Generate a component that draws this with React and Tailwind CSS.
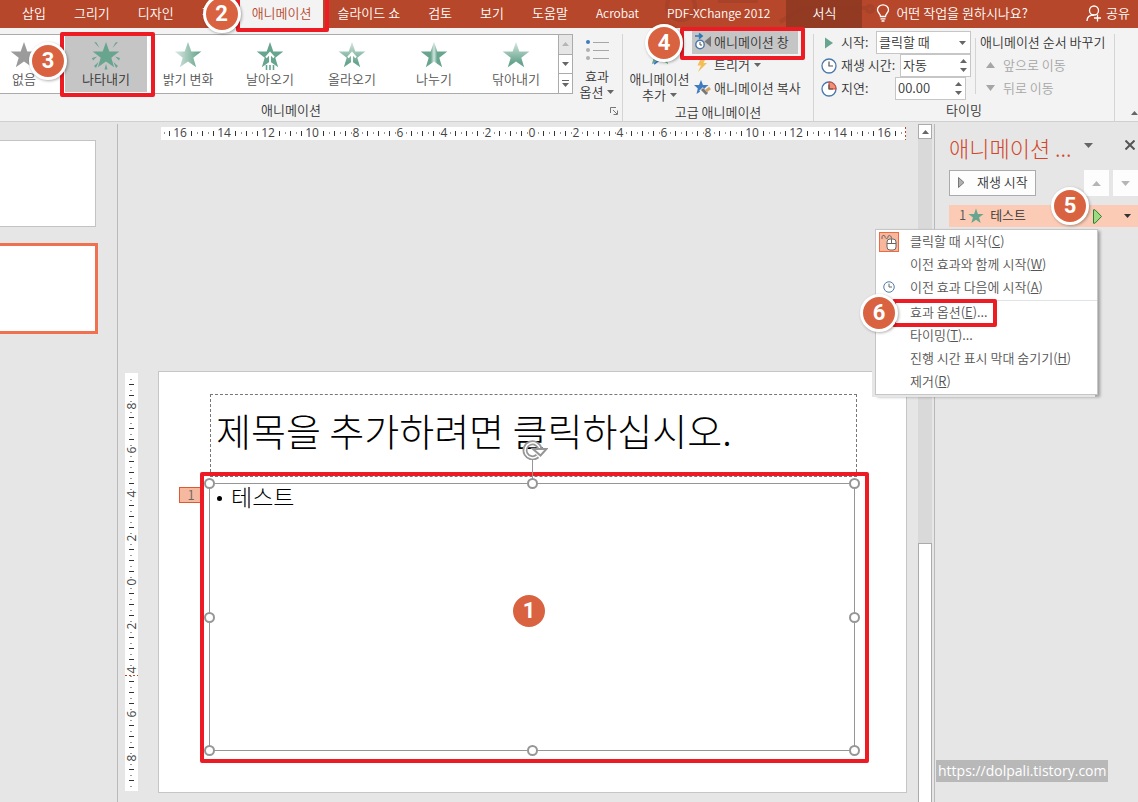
const STAR = 'M14 1 L17.3 10.4 L27.3 10.6 L19.3 16.7 L22.2 26.3 L14 20.6 L5.8 26.3 L8.7 16.7 L0.7 10.6 L10.7 10.4 Z';

const tabs = ['삽입', '그리기', '디자인', '전환', '애니메이션', '슬라이드 쇼', '검토', '보기', '도움말'];
const addInTabs = ['Acrobat', 'PDF-XChange 2012'];

const effects = [
  { id: 'none', label: '없음' },
  { id: 'appear', label: '나타내기' },
  { id: 'fade', label: '밝기 변화' },
  { id: 'fly', label: '날아오기' },
  { id: 'float', label: '올라오기' },
  { id: 'split', label: '나누기' },
  { id: 'wipe', label: '닦아내기' },
];

const Badge = ({ n, className = '' }) => (
  <span
    className={`absolute z-20 flex size-[38px] items-center justify-center rounded-full border-[3px] border-white bg-[#d96341] font-['Roboto',sans-serif] text-[22px] font-bold leading-none text-white shadow-[1px_1px_3px_#00000055] ${className}`}
  >
    {n}
  </span>
);

const Frame = ({ className = '' }) => (
  <span className={`pointer-events-none absolute z-10 rounded-[2px] border-4 border-[#ed1c24] ${className}`}></span>
);

const Caret = ({ up, className = 'text-[#666]' }) => (
  <svg width="7" height="4" viewBox="0 0 7 4" className={`shrink-0 ${className}`} fill="currentColor">
    <path d={up ? 'M0 4 L3.5 0 L7 4 Z' : 'M0 0 L3.5 4 L7 0 Z'} />
  </svg>
);

const ClockIcon = ({ size = 16, red }) => (
  <svg width={size} height={size} viewBox="0 0 16 16" fill="none">
    <circle cx="8" cy="8" r="7" fill="#fff" stroke="#4a78ab" strokeWidth="1.3" />
    {red && <path d="M8 8 V1 A7 7 0 0 1 15 8 Z" fill="#f0907a" stroke="#d9472b" />}
    <path d="M8 3.5 V8 H12" stroke="#555" strokeWidth="1.2" />
  </svg>
);

const EffectIcon = ({ id }) => {
  const fill = { none: '#9b9b9b', fade: 'url(#fade)', float: 'url(#wipe)', split: 'url(#split)', wipe: 'url(#wipe)' }[id] || '#68a58f';
  return (
    <svg width="28" height="29" viewBox="0 0 28 29" fill="none">
      <defs>
        <linearGradient id="fade">
          <stop offset="0" stopColor="#dcebe5" />
          <stop offset="1" stopColor="#5fa088" />
        </linearGradient>
        <linearGradient id="wipe" x1="0" y1="0" x2="0" y2="1">
          <stop offset="0" stopColor="#d3e6df" />
          <stop offset="0.8" stopColor="#68a58f" />
        </linearGradient>
        <linearGradient id="split">
          <stop offset="0.38" stopColor="#68a58f" />
          <stop offset="0.5" stopColor="#d3e6df" />
          <stop offset="0.62" stopColor="#68a58f" />
        </linearGradient>
      </defs>
      <path d={STAR} fill={fill} />
      {id === 'appear' && (
        <path
          d="M2 1 L4.5 1.5 L7.5 7 Z M26 1 L23.5 1.5 L20.5 7 Z M0 17 L5 15.5 L1 19.5 Z M28 17 L23 15.5 L27 19.5 Z M6.5 21 L2 25 L4 27 Z M21.5 21 L26 25 L24 27 Z M14 23 L12.5 28.5 H15.5 Z"
          fill="#68a58f"
        />
      )}
      {(id === 'fly' || id === 'float') && <path d="M14 23 V12 M10 16.5 L14 12 L18 16.5" stroke="#fff" strokeWidth="2" />}
      {id === 'fly' && <path d="M10.5 24 V29 M14 24 V29 M17.5 24 V29" stroke="#68a58f" strokeWidth="1.6" />}
    </svg>
  );
};

const GroupLabel = ({ children, className = '' }) => (
  <div className={`mt-auto mb-0.5 text-center leading-[18px] ${className}`}>{children}</div>
);

const Header = () => (
  <header className="relative flex h-7 shrink-0 items-stretch bg-[#b7472a] pl-2 text-white">
    <svg className="absolute left-[640px] top-0" width="250" height="28" fill="none" stroke="#a84228" strokeWidth="4">
      <circle cx="41" cy="6" r="14" />
      <path d="M78 1 H118 M140 22 L162 8 H226" />
      <circle cx="230" cy="9" r="3" />
    </svg>
    {tabs.map((tab) =>
      tab === '애니메이션' ? (
        <button key={tab} className="relative whitespace-nowrap bg-[#f3f3f3] px-3 pb-0.5 text-[#b7472a]">
          {tab}
          <Frame className="-left-1 -right-1.5 -bottom-1 -top-2" />
          <Badge n={2} className="-left-[37px] -top-[5px]" />
        </button>
      ) : (
        <button key={tab} className="relative whitespace-nowrap px-[14px] pb-0.5">{tab}</button>
      )
    )}
    {addInTabs.map((tab) => (
      <button key={tab} className="relative whitespace-nowrap px-[14px] pb-0.5 text-xs">{tab}</button>
    ))}
    <button className="relative ml-0.5 bg-[#8f3922]/90 px-[26px] pb-0.5">서식</button>
    <button className="relative ml-3.5 flex items-center gap-1.5 whitespace-nowrap pb-0.5">
      <svg width="14" height="18" viewBox="0 0 14 18" fill="none" stroke="currentColor" strokeWidth="1.3">
        <path d="M4.5 12.5 C4.5 9.5 1.5 9 1.5 5.8 A5.5 5 0 0 1 12.5 5.8 C12.5 9 9.5 9.5 9.5 12.5 Z M4.5 14.8 H9.5 M5.5 17 H8.5" />
      </svg>
      어떤 작업을 원하시나요?
    </button>
    <button className="relative ml-auto mr-2 flex items-center gap-1 pb-0.5">
      <svg width="16" height="17" viewBox="0 0 16 17" fill="none" stroke="currentColor" strokeWidth="1.3">
        <circle cx="8" cy="5.5" r="4.5" />
        <path d="M1 16 C1 12 4 10 8 10 M11.5 9.5 V16.5 M8 13 H15" />
      </svg>
      공유
    </button>
  </header>
);

const AnimationGroup = () => (
  <section className="flex w-[623px] shrink-0 flex-col border-r border-[#d4d4d4]">
    <div className="flex">
      <div className="flex h-[60px] w-[558px] border-y border-[#ababab] bg-white">
        <div className="-ml-[17px] flex py-px">
          {effects.map((effect) => (
            <button
              key={effect.id}
              className={`relative flex w-[82px] flex-col items-center pt-[5px] leading-[18px] ${effect.id === 'appear' ? 'bg-[#c5c5c5] text-[#333]' : 'text-[#555]'}`}
            >
              <EffectIcon id={effect.id} />
              {effect.label}
              {effect.id === 'appear' && (
                <>
                  <Frame className="-bottom-[5px] -left-[5px] -right-2 -top-1" />
                  <Badge n={3} className="-left-9 top-1.5" />
                </>
              )}
            </button>
          ))}
        </div>
      </div>
      <div className="flex h-[60px] w-[15px] flex-col divide-y divide-[#ababab] border border-[#ababab] bg-white">
        <button aria-label="위로" className="flex flex-1 items-center justify-center bg-[#e6e6e6]"><Caret up className="text-[#b5b5b5]" /></button>
        <button aria-label="아래로" className="flex flex-1 items-center justify-center"><Caret /></button>
        <button aria-label="자세히" className="flex flex-1 flex-col items-center justify-center gap-0.5">
          <span className="h-px w-[7px] bg-[#666]"></span>
          <Caret />
        </button>
      </div>
      <button className="flex w-12 flex-col items-center pt-[5px] leading-4">
        <svg width="23" height="22" viewBox="0 0 23 22" stroke="#a6a6a6" className="mb-[7px]">
          <path d="M7 3.5 H23 M7 11.5 H23 M7 19.5 H23" />
          <circle cx="2" cy="3" r="2" fill="#3f7bbf" stroke="none" />
          <circle cx="2" cy="11" r="2" fill="#b0b0b0" stroke="none" />
          <circle cx="2" cy="19" r="2" fill="#b0b0b0" stroke="none" />
        </svg>
        효과
        <span className="flex items-center gap-1">옵션 <Caret /></span>
      </button>
    </div>
    <div className="mt-auto flex items-center">
      <GroupLabel className="ml-10 flex-1">애니메이션</GroupLabel>
      <button aria-label="추가 효과 옵션 표시" className="ml-[68px] mr-1">
        <svg width="8" height="8" viewBox="0 0 8 8" fill="none" stroke="#777">
          <path d="M0.5 6 V0.5 H6 M3 3 L7 7 M7.5 3.5 V7.5 H3.5" />
        </svg>
      </button>
    </div>
  </section>
);

const AdvancedGroup = () => (
  <section className="flex w-[191px] shrink-0 flex-col border-r border-[#d4d4d4]">
    <div className="-mt-[3px] flex">
      <button className="relative flex w-[69px] flex-col items-center pl-1 pt-[7px] leading-4">
        <svg width="28" height="29" viewBox="0 0 28 29" className="mb-1">
          <path d={STAR} fill="#68a58f" />
          <path d="M8 26 L13 22" fill="none" stroke="#3f7bbf" strokeWidth="2" />
        </svg>
        <span className="whitespace-nowrap">애니메이션</span>
        <span className="flex items-center gap-1">추가 <Caret /></span>
      </button>
      <div className="flex flex-col">
        <button className="relative flex h-[23px] w-[106px] items-center gap-0.5 bg-[#c5c5c5] pb-0.5 pl-0.5 text-[#333]">
          <svg width="18" height="17" viewBox="0 0 18 17" fill="none">
            <path d="M1 3 H7 M5 0.5 L8 3 L5 5.5" stroke="#2e75b6" strokeWidth="1.7" />
            <circle cx="6" cy="11.5" r="4.2" fill="#fff" stroke="#4a78ab" strokeWidth="1.4" />
            <path d="M6 9 V12 H8" stroke="#555" />
            <path d="M17 3 V14 L10.5 8.5 Z" fill="#777" />
          </svg>
          애니메이션 창
          <Frame className="-left-3 -right-[7px] -top-1 -bottom-[6px]" />
          <Badge n={4} className="-left-[47px] -top-[7px]" />
        </button>
        <button className="flex h-[23px] items-center gap-0.5 pb-0.5 pl-0.5">
          <svg width="18" height="16" viewBox="0 0 18 16">
            <path d="M7 1 H12 L9.5 6 H13 L4 15 L7 8.5 H3.5 Z" fill="#f3bd58" />
          </svg>
          트리거 <Caret className="ml-0.5 text-[#666]" />
        </button>
        <button className="flex h-[23px] items-center gap-0.5 whitespace-nowrap pb-0.5 pl-0.5">
          <svg width="18" height="16" viewBox="0 0 18 16">
            <path d="M7 0 L9 5 H14.5 L10.5 8.5 L11.5 14 L7 11 L2.5 14 L3.8 8.5 L0 5 H5 Z" fill="#3f7bbf" />
            <path d="M7 9 L12 14 M9 15 L15 8" stroke="#f3f3f3" strokeWidth="5" />
            <path d="M8 9 L13 14" stroke="#777" strokeWidth="3" />
            <path d="M12 11 L16 8" stroke="#d5a36a" strokeWidth="3" />
          </svg>
          애니메이션 복사
        </button>
      </div>
    </div>
    <GroupLabel>고급 애니메이션</GroupLabel>
  </section>
);

const Spinner = ({ id, value, className = '' }) => (
  <span className={`flex h-[23px] items-center border border-[#c6c6c6] bg-white pr-[3px] ${className}`}>
    <input id={id} defaultValue={value} className="w-0 min-w-0 flex-1 pb-0.5 pl-0.5 outline-none" />
    <span className="flex flex-col gap-[5px]">
      <Caret up />
      <Caret />
    </span>
  </span>
);

const TimingGroup = () => (
  <section className="flex w-[301px] shrink-0 flex-col border-r border-[#d4d4d4]">
    <div className="-mt-[3px] flex pl-[7px]">
      <div className="flex w-[150px] flex-col">
        <div className="flex h-[23px] items-center">
          <svg width="20" height="12" viewBox="0 0 20 12"><path d="M4 0.5 L12 6 L4 11.5 Z" fill="#68a58f" /></svg>
          <label htmlFor="start" className="pb-0.5">시작:</label>
          <span className="relative ml-auto flex h-[23px] w-[95px] items-center border border-[#c6c6c6] bg-white">
            <select id="start" className="w-full appearance-none pb-0.5 pl-0.5 outline-none">
              <option>클릭할 때</option>
            </select>
            <Caret className="absolute right-1 text-[#666]" />
          </span>
        </div>
        <div className="flex h-[23px] items-center">
          <span className="w-5"><ClockIcon /></span>
          <label htmlFor="duration" className="whitespace-nowrap pb-0.5">재생 시간:</label>
          <Spinner id="duration" value="자동" className="ml-auto w-[71px]" />
        </div>
        <div className="flex h-[23px] items-center">
          <span className="w-5"><ClockIcon red /></span>
          <label htmlFor="delay" className="pb-0.5">지연:</label>
          <Spinner id="delay" value="00.00" className="ml-auto mr-[5px] w-[71px]" />
        </div>
      </div>
      <div className="ml-1 mt-[7px] h-14 w-px bg-[#d4d4d4]"></div>
      <div className="ml-1 flex flex-col">
        <span className="h-[23px] whitespace-nowrap leading-[21px]">애니메이션 순서 바꾸기</span>
        <button disabled className="flex h-[23px] items-center gap-2 pb-0.5 pl-1.5 text-[#a6a6a6]">
          <svg width="9" height="6" viewBox="0 0 9 6" fill="currentColor"><path d="M0 6 L4.5 0 L9 6 Z" /></svg>
          앞으로 이동
        </button>
        <button disabled className="flex h-[23px] items-center gap-2 pb-0.5 pl-1.5 text-[#a6a6a6]">
          <svg width="9" height="6" viewBox="0 0 9 6" fill="currentColor"><path d="M0 0 L4.5 6 L9 0 Z" /></svg>
          뒤로 이동
        </button>
      </div>
    </div>
    <GroupLabel>타이밍</GroupLabel>
  </section>
);

const Ruler = ({ length, zero, vertical, cursor }) => {
  const marks = [];
  for (let i = -67; i <= 67; i++) {
    const at = Math.round(zero + i * 5.5);
    if (at > 2 && at < length - 2) marks.push({ i, at });
  }
  return (
    <svg width={vertical ? 13 : length} height={vertical ? length : 13} className="shrink-0 overflow-visible bg-white">
      {marks.map(({ i, at }) => {
        if (i % 8 === 0) {
          return (
            <text
              key={i}
              x={vertical ? 7 : at}
              y={vertical ? at : 10}
              transform={vertical ? `rotate(-90 7 ${at})` : undefined}
              dy={vertical ? 4 : 0}
              textAnchor="middle"
              fill="#444"
              className="font-['Open_Sans',sans-serif] text-[12px] font-normal"
            >
              {Math.abs(i / 4)}
            </text>
          );
        }
        // whole and half units get the long dark tick
        const long = i % 2 === 0;
        const besideLabel = Math.abs(i % 8) === 1 || Math.abs(i % 8) === 7;
        if (besideLabel && Math.abs(i) > 38 && !vertical) return null;
        const size = long ? 5 : 2;
        const from = long ? 4 : 5;
        return (
          <rect
            key={i}
            x={vertical ? from : at}
            y={vertical ? at : from}
            width={vertical ? size : 1}
            height={vertical ? 1 : size}
            fill={long ? '#333' : '#999'}
          />
        );
      })}
      <path d={vertical ? `M0 ${cursor}.5 H13` : `M${cursor}.5 0 V13`} stroke="#c8401f" strokeDasharray="2 2" />
    </svg>
  );
};

const Handle = ({ className }) => (
  <span className={`absolute size-[11px] rounded-full border-2 border-[#969696] bg-white ${className}`}></span>
);

const Slide = () => (
  <div className="ml-5 flex flex-1 flex-col border border-[#c6c6c6] bg-white pb-[41px] pl-[51px] pr-[49px] pt-[22px] text-black">
    <h1 className="h-[83px] whitespace-nowrap border border-dashed border-[#777] pl-[5px] text-[38px] font-light leading-[70px]">
      제목을 추가하려면 클릭하십시오.
    </h1>
    <div className="relative -ml-px mr-0.5 mt-1.5 h-[268px] border border-[#969696]">
      <ul className="pl-[7px] text-[23px] font-light leading-6">
        <li className="flex items-center gap-[9px]">
          <span className="mt-1 size-[5px] rounded-full bg-black"></span>테스트
        </li>
      </ul>
      <span className="absolute -left-[31px] top-[3px] flex h-4 w-6 items-center justify-center border border-[#dd5a31] bg-[#f6b89e] text-[#666]">1</span>
      <Frame className="-bottom-[13px] -left-[10px] -right-[15px] -top-3" />
      <div className="absolute inset-0 z-20">
        <span className="absolute -top-6 left-1/2 h-6 w-px bg-[#969696]"></span>
        <svg className="absolute -top-[44px] left-1/2 -ml-[10px]" width="26" height="20" viewBox="0 0 26 20" fill="none">
          <path d="M15.5 16 A7.5 7.5 0 1 1 18 9.5" stroke="#969696" strokeWidth="5" />
          <path d="M15.5 16 A7.5 7.5 0 1 1 18 9.5" stroke="#fff" strokeWidth="1.5" />
          <path d="M11 9 H24.5 L18.5 15.5 Z" fill="#fff" stroke="#969696" strokeWidth="2" />
        </svg>
        <Handle className="-left-1.5 -top-1.5" />
        <Handle className="-top-1.5 left-1/2 -ml-[5px]" />
        <Handle className="-right-1.5 -top-1.5" />
        <Handle className="-left-1.5 top-1/2 -mt-[5px]" />
        <Handle className="-right-1.5 top-1/2 -mt-[5px]" />
        <Handle className="-bottom-1.5 -left-1.5" />
        <Handle className="-bottom-1.5 left-1/2 -ml-[5px]" />
        <Handle className="-bottom-1.5 -right-1.5" />
      </div>
      <Badge n={1} className="left-1/2 top-1/2 -ml-[22px] -mt-[25px] shadow-none" />
    </div>
  </div>
);

const menuItems = [
  { text: '클릭할 때 시작', shortcut: 'C', icon: 'mouse' },
  { text: '이전 효과와 함께 시작', shortcut: 'W' },
  { text: '이전 효과 다음에 시작', shortcut: 'A', icon: 'clock' },
  { text: '효과 옵션', shortcut: 'E', more: true, divider: true },
  { text: '타이밍', shortcut: 'T', more: true },
  { text: '진행 시간 표시 막대 숨기기', shortcut: 'H' },
  { text: '제거', shortcut: 'R' },
];

const ContextMenu = () => (
  <ul className="absolute -left-[74px] top-6 z-10 w-[223px] border border-[#c6c6c6] bg-white pb-px text-[#555] shadow-[-3px_2px_0_#e6e6e6,2px_2px_3px_#00000055]">
    {menuItems.map((item) => (
      <li key={item.shortcut} className={item.divider ? 'mt-px border-t border-[#e0e3e6]' : ''}>
        <button className="relative flex h-[23px] w-full items-center whitespace-nowrap pb-0.5 pl-[34px] text-left">
          {item.icon === 'mouse' && (
            <span className="absolute left-[3px] top-0.5 flex size-5 items-center justify-center border border-[#ee6b42] bg-[#f8b79c]">
              <svg width="18" height="18" viewBox="0 0 18 18" fill="none" stroke="#666">
                <path d="M2 6 V4 C2 2 5 2 5 3.5 C5 6 8 6 8 4 C8 1.5 11.5 2 11.5 5.5" />
                <rect x="7" y="6" width="9" height="11" rx="3" fill="#fff" />
                <path d="M7 10.5 H16 M11.5 6 V10.5" />
              </svg>
            </span>
          )}
          {item.icon === 'clock' && <span className="absolute left-[7px]"><ClockIcon size={12} /></span>}
          {item.text}(<u>{item.shortcut}</u>){item.more && '...'}
          {item.shortcut === 'E' && (
            <>
              <Frame className="-bottom-[3px] -top-0.5 left-4 w-[105px]" />
              <Badge n={6} className="-left-[16px] -top-[7px]" />
            </>
          )}
        </button>
      </li>
    ))}
  </ul>
);

const AnimationPane = () => (
  <aside className="flex w-[203px] shrink-0 flex-col pl-3.5">
    <div className="flex h-[46px] items-center">
      <h2 className="whitespace-nowrap text-[22px] font-light text-[#d2472a]">애니메이션 ...</h2>
      <button aria-label="작업창 옵션" className="mb-1 ml-3">
        <svg width="9" height="5" viewBox="0 0 9 5" fill="#666"><path d="M0 0 H9 L4.5 5 Z" /></svg>
      </button>
      <button aria-label="닫기" className="mb-1 ml-auto mr-[3px]">
        <svg width="10" height="10" viewBox="0 0 10 10" stroke="#555" strokeWidth="2"><path d="M0.5 0.5 L9.5 9.5 M9.5 0.5 L0.5 9.5" /></svg>
      </button>
    </div>
    <div className="flex h-[26px] justify-between">
      <button className="flex w-[87px] items-center gap-3 border border-[#ababab] bg-[#fdfdfd] pb-0.5 pl-2">
        <svg width="7" height="11" viewBox="0 0 7 11" fill="#b0b0b0" stroke="#777"><path d="M0.5 0.5 L6 5.5 L0.5 10.5 Z" /></svg>
        재생 시작
      </button>
      <div className="flex gap-1">
        <button aria-label="위로 이동" className="flex w-[25px] items-center justify-center bg-[#fdfdfd]"><Caret up className="h-[5px] w-[9px] text-[#b5b5b5]" /></button>
        <button aria-label="아래로 이동" className="flex w-[25px] items-center justify-center bg-[#fdfdfd]"><Caret className="h-[5px] w-[9px] text-[#b5b5b5]" /></button>
      </div>
    </div>
    <div className="relative mt-[9px] flex h-[22px] items-center bg-[#fbcbb5] pl-[10px]">
      <span className="pb-0.5 text-[#555]">1</span>
      <svg width="16" height="16" viewBox="0 0 28 28" className="ml-0.5 mr-1.5"><path d={STAR} fill="#68a58f" /></svg>
      <span className="pb-0.5">테스트</span>
      <svg width="9" height="15" viewBox="0 0 9 15" className="ml-auto mr-[22px]" fill="#9bdc82" stroke="#2f7d32"><path d="M0.5 0.8 H2 L8.5 7.5 L2 14.2 H0.5 Z" /></svg>
      <button aria-label="효과 메뉴" className="mr-[7px]"><Caret className="text-[#333]" /></button>
      <Badge n={5} className="left-[102px] -top-[18px]" />
      <ContextMenu />
    </div>
    <p className="mb-[20px] mt-auto flex">
      <a href="https://dolpali.tistory.com" className="-ml-[13px] bg-[#b8b8b8] px-0.5 font-['Open_Sans',sans-serif] text-[14px] font-normal leading-[22px] text-white">
        https://dolpali.tistory.com
      </a>
    </p>
  </aside>
);

export default function App() {
  return (
    <div className="flex h-screen flex-col overflow-hidden bg-[#e6e6e6] font-['Noto_Sans_CJK_KR','Noto_Sans',sans-serif] text-[13px] font-[350] leading-[18px] text-[#333]">
      <Header />
      <div className="flex h-[94px] shrink-0 border-b border-[#d0d0d0] bg-[#f3f3f3] pt-1.5">
        <AnimationGroup />
        <AdvancedGroup />
        <TimingGroup />
        <button aria-label="리본 메뉴 축소" className="mb-1.5 ml-auto mt-auto">
          <Caret up />
        </button>
      </div>

      <div className="flex min-h-0 flex-1 pt-0.5">
        <nav className="flex w-[118px] shrink-0 flex-col gap-4 border-r border-[#b9b9b9] pt-4">
          <button aria-label="슬라이드 1" className="h-[87px] w-24 border border-l-0 border-[#c3c3c3] bg-white"></button>
          <button aria-label="슬라이드 2" className="h-[91px] w-[98px] border-[3px] border-l-0 border-[#f0714f] bg-white"></button>
        </nav>

        <main className="flex min-w-0 flex-1 flex-col pb-[9px] pl-[7px] pr-[11px] pt-[3px]">
          <div className="flex pl-9">
            <Ruler length={745} zero={371} cursor={744} />
          </div>
          <div className="mt-auto flex">
            <div className="flex flex-col pt-0.5">
              <Ruler length={418} zero={209} cursor={302} vertical />
            </div>
            <Slide />
          </div>
        </main>

        <div className="flex w-[17px] shrink-0 flex-col border-r border-[#b9b9b9] pr-0.5">
          <button aria-label="위로 스크롤" className="flex h-[15px] items-center justify-center border border-[#ababab] bg-white"><Caret up /></button>
          <div className="flex flex-1 flex-col justify-end bg-[#d9d9d9]">
            <div className="h-[39%] border border-b-0 border-[#ababab] bg-white"></div>
          </div>
        </div>

        <AnimationPane />
      </div>
    </div>
  );
}
